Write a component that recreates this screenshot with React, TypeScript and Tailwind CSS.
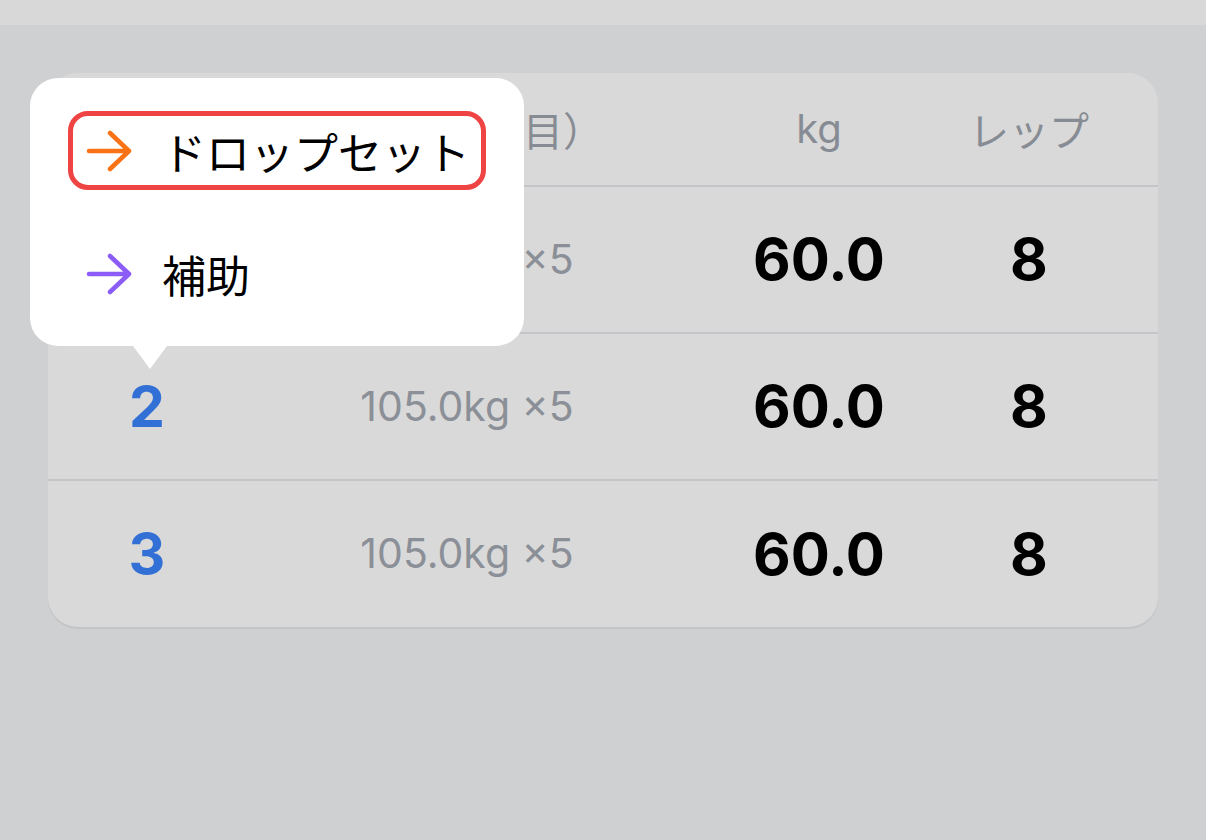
import React from "react";

const rows = [
  { set: "1", prev: "105.0kg ×5", kg: "60.0", reps: "8" },
  { set: "2", prev: "105.0kg ×5", kg: "60.0", reps: "8" },
  { set: "3", prev: "105.0kg ×5", kg: "60.0", reps: "8" },
];

function Arrow({ color }: { color: string }) {
  return (
    <svg width="46" height="42" viewBox="0 0 46 42" fill="none" className="shrink-0">
      <path
        d="M3 21H43M24 3L43 21L24 39"
        stroke={color}
        strokeWidth="4.5"
        strokeLinecap="round"
        strokeLinejoin="round"
      />
    </svg>
  );
}

export default function App() {
  return (
    <div className="min-h-[840px] w-full bg-[#cfd0d2] font-['Inter','Noto_Sans_CJK_JP',sans-serif]">
      <div className="h-[25px] bg-[#d8d8d8]" />
      <div className="relative px-12 pt-12">
        <div className="overflow-hidden rounded-[30px] bg-[#d9d9d9] shadow-[0_2px_1px_rgba(0,0,0,0.06)]">
          <div className="grid h-[114px] grid-cols-[198px_442px_262px_158px_1fr] items-center border-b-2 border-[#c5c5c9] text-[40px] text-[#878c94]">
            <div className="text-center font-['Noto_Sans_CJK_JP',sans-serif]">セット</div>
            <div className="pl-[10px] text-center font-['Noto_Sans_CJK_JP',sans-serif]">前回（1回目）</div>
            <div className="text-center">kg</div>
            <div className="text-center font-['Noto_Sans_CJK_JP',sans-serif]">レップ</div>
            <div />
          </div>
          {rows.map((r, i) => (
            <div
              key={r.set}
              className={
                i < rows.length - 1
                  ? "grid h-[147px] grid-cols-[198px_442px_262px_158px_1fr] items-center border-b-2 border-[#c5c5c9]"
                  : "grid h-[146px] grid-cols-[198px_442px_262px_158px_1fr] items-center"
              }
            >
              <div className="text-center text-[57px] font-bold text-[#3370d6]">{r.set}</div>
              <div className="text-center text-[41px] text-[#8b8f97]">{r.prev}</div>
              <div className="text-center text-[58px] font-bold text-black">{r.kg}</div>
              <div className="text-center text-[58px] font-bold text-black">{r.reps}</div>
              <div />
            </div>
          ))}
        </div>

        <div className="absolute left-[30px] top-[53px] w-[494px] rounded-[28px] bg-white px-[38px] py-[33px]">
          <div className="flex flex-col gap-[44px]">
            <div className="flex h-[79px] items-center gap-[30px] rounded-[20px] border-[5px] border-[#ef4444] pl-[13px]">
              <Arrow color="#f97316" />
              <span className="font-['Noto_Sans_CJK_JP',sans-serif] text-[44px] leading-none text-black">
                ドロップセット
              </span>
            </div>
            <div className="flex h-[79px] items-center gap-[30px] rounded-[20px] border-[5px] border-transparent pl-[13px]">
              <Arrow color="#8b5cf6" />
              <span className="font-['Noto_Sans_CJK_JP',sans-serif] text-[44px] leading-none text-black">
                補助
              </span>
            </div>
          </div>
          <svg
            width="34"
            height="24"
            viewBox="0 0 34 24"
            className="absolute left-[103px] top-full"
          >
            <path d="M0 0H34L17 23Z" fill="white" />
          </svg>
        </div>
      </div>
    </div>
  );
}
